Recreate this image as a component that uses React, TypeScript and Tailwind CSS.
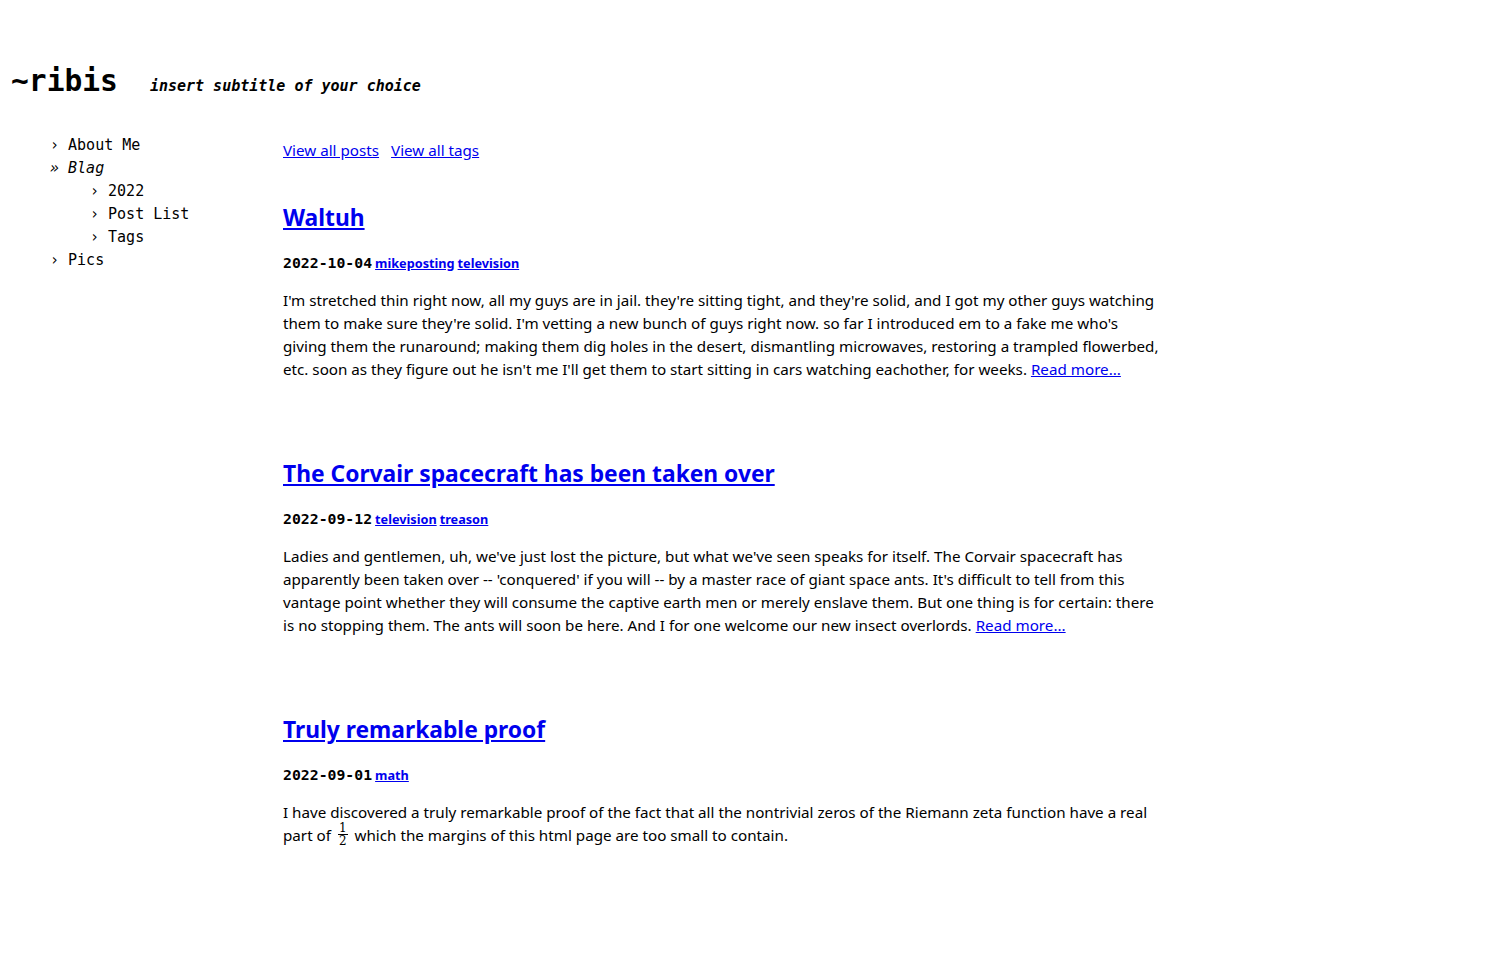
import React from "react";

const mono = { fontFamily: '"DejaVu Sans Mono", monospace' };

function Frac() {
  return (
    <span className="inline-flex flex-col items-center align-middle mx-[3px] leading-none text-[12px] relative top-[-2px]" style={{ fontFamily: '"DejaVu Serif", "Liberation Serif", serif' }}>
      <span className="px-[1px] border-b border-black leading-[12px]">1</span>
      <span className="leading-[12px]">2</span>
    </span>
  );
}

type Post = { title: string; date: string; tags: string[]; body: React.ReactNode };

const posts: Post[] = [
  {
    title: "Waltuh",
    date: "2022-10-04",
    tags: ["mikeposting", "television"],
    body: (
      <>
        I'm stretched thin right now, all my guys are in jail. they're sitting tight, and they're solid, and I got my other guys watching them to make sure they're solid. I'm vetting a new bunch of guys right now. so far I introduced em to a fake me who's giving them the runaround; making them dig holes in the desert, dismantling microwaves, restoring a trampled flowerbed, etc. soon as they figure out he isn't me I'll get them to start sitting in cars watching eachother, for weeks.{" "}
        <a href="#" className="text-[#0000ee] underline">Read more...</a>
      </>
    ),
  },
  {
    title: "The Corvair spacecraft has been taken over",
    date: "2022-09-12",
    tags: ["television", "treason"],
    body: (
      <>
        Ladies and gentlemen, uh, we've just lost the picture, but what we've seen speaks for itself. The Corvair spacecraft has apparently been taken over -- 'conquered' if you will -- by a master race of giant space ants. It's difficult to tell from this vantage point whether they will consume the captive earth men or merely enslave them. But one thing is for certain: there is no stopping them. The ants will soon be here. And I for one welcome our new insect overlords.{" "}
        <a href="#" className="text-[#0000ee] underline">Read more...</a>
      </>
    ),
  },
  {
    title: "Truly remarkable proof",
    date: "2022-09-01",
    tags: ["math"],
    body: (
      <>
        I have discovered a truly remarkable proof of the fact that all the nontrivial zeros of the Riemann zeta function have a real part of <Frac /> which the margins of this html page are too small to contain.
      </>
    ),
  },
];

export default function App() {
  return (
    <div className="min-h-screen bg-white text-black" style={{ fontFamily: '"Noto Sans", sans-serif' }}>
      <header className="flex items-baseline pt-[61px] pl-[11px]">
        <h1 className="text-[29.6px] font-bold leading-[40px]" style={mono}>~ribis</h1>
        <span className="ml-[32px] text-[15px] font-bold italic" style={mono}>insert subtitle of your choice</span>
      </header>
      <div className="flex mt-[33px]">
        <nav className="w-[283px] shrink-0 pl-[50px] text-[15px] leading-[23px]" style={mono}>
          <div>› About Me</div>
          <div className="italic">» Blag</div>
          <div className="pl-[40px]">
            <div>› 2022</div>
            <div>› Post List</div>
            <div>› Tags</div>
          </div>
          <div>› Pics</div>
        </nav>
        <main className="w-[880px] pt-[5px]">
          <div className="flex gap-[12px] text-[15.2px] leading-[23px]">
            <a href="#" className="text-[#0000ee] underline">View all posts</a>
            <a href="#" className="text-[#0000ee] underline">View all tags</a>
          </div>
          {posts.map((p, i) => (
            <article key={i} className={i === 0 ? "mt-[39px]" : "mt-[76px]"}>
              <h2 className="text-[22.8px] font-bold leading-[33px]">
                <a href="#" className="text-[#0000ee] underline">{p.title}</a>
              </h2>
              <div className="mt-[19px] flex items-baseline gap-[3px] leading-[20px]">
                <span className="text-[14.8px] font-bold" style={mono}>{p.date}</span>
                {p.tags.map((t) => (
                  <a key={t} href="#" className="text-[12.7px] font-bold text-[#0000ee] underline">{t}</a>
                ))}
              </div>
              <p className="mt-[16px] text-[15.2px] leading-[23px]">{p.body}</p>
            </article>
          ))}
        </main>
      </div>
    </div>
  );
}
